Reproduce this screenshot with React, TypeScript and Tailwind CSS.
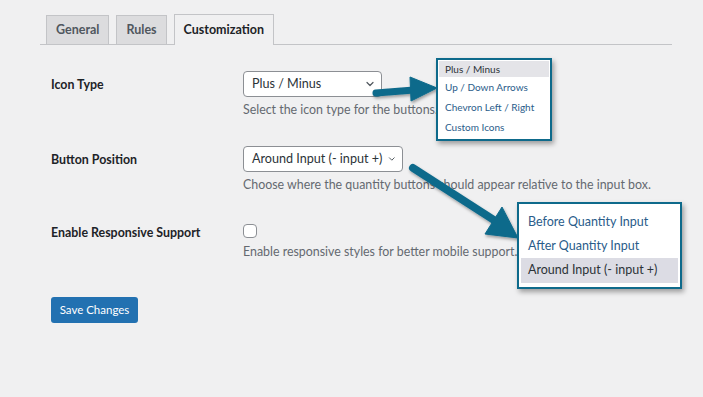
import React, { type FC } from "react";

const font = { fontFamily: 'Lato, "Noto Sans", sans-serif' };

const Chevron: FC = () => (
  <svg width="12" height="12" viewBox="0 0 20 20" fill="none">
    <path d="M5 7.5l5 5 5-5" stroke="#50575e" strokeWidth="2" strokeLinecap="round" strokeLinejoin="round" />
  </svg>
);

const Select: FC<{ value: string; width: string }> = ({ value, width }) => (
  <div
    className={`${width} h-[26px] flex items-center justify-between gap-[5px] bg-white border border-[#8c8f94] rounded-[4px] pl-[8px] pr-[5px] text-[12.6px] text-[#2c3338] whitespace-nowrap`}
  >
    <span>{value}</span>
    <Chevron />
  </div>
);

const App: FC = () => {
  return (
    <div className="relative w-[703px] h-[397px] bg-[#f0f0f1] overflow-hidden" style={font}>
      {/* Tabs */}
      <div className="pt-[14px] ml-[40px] mr-[31px] flex items-end gap-[7px] pl-[6px] border-b border-[#c3c4c7] h-[45px]">
        <div className="h-[29px] px-[9px] flex items-center bg-[#dcdcde] border border-b-0 border-[#c3c4c7] text-[12.5px] font-bold text-[#50575e]">
          General
        </div>
        <div className="h-[29px] px-[9px] flex items-center bg-[#dcdcde] border border-b-0 border-[#c3c4c7] text-[12.5px] font-bold text-[#50575e]">
          Rules
        </div>
        <div className="h-[31px] -mb-px px-[9px] flex items-center bg-[#f0f0f1] border border-b-0 border-[#c3c4c7] text-[12.5px] font-bold text-[#1d2327]">
          Customization
        </div>
      </div>

      {/* Form */}
      <div className="ml-[51px] mt-[26px] flex flex-col text-[12.4px]">
        <div className="flex h-[75px]">
          <div className="w-[192px] pt-[5px] font-bold text-[#1d2327]">Icon Type</div>
          <div className="flex flex-col gap-[4px]">
            <Select value="Plus / Minus" width="w-[139px]" />
            <p className="text-[#646970]">Select the icon type for the buttons.</p>
          </div>
        </div>
        <div className="flex h-[78px]">
          <div className="w-[192px] pt-[5px] font-bold text-[#1d2327]">Button Position</div>
          <div className="flex flex-col gap-[4px]">
            <Select value="Around Input (- input +)" width="w-[160px]" />
            <p className="text-[#646970] whitespace-nowrap">
              Choose where the quantity buttons should appear relative to the input box.
            </p>
          </div>
        </div>
        <div className="flex h-[73px]">
          <div className="w-[192px] font-bold text-[#1d2327] whitespace-nowrap">Enable Responsive Support</div>
          <div className="flex flex-col gap-[5px]">
            <div className="w-[14px] h-[14px] bg-white border border-[#8c8f94] rounded-[4px]" />
            <p className="text-[#646970] whitespace-nowrap">Enable responsive styles for better mobile support.</p>
          </div>
        </div>
        <div>
          <button className="h-[26px] w-[87px] bg-[#2271b1] rounded-[3px] text-white text-[11.5px]">
            Save Changes
          </button>
        </div>
      </div>

      {/* Arrows */}
      <svg className="absolute left-0 top-0" width="703" height="397" viewBox="0 0 703 397">
        <defs>
          <filter id="sh" x="-20%" y="-20%" width="140%" height="140%">
            <feDropShadow dx="1" dy="2" stdDeviation="1.5" floodColor="#000" floodOpacity="0.35" />
          </filter>
        </defs>
        <g filter="url(#sh)" fill="#0e6a8b" stroke="#0e6a8b">
          <line x1="376" y1="93" x2="414" y2="90" strokeWidth="7" strokeLinecap="round" />
          <polygon points="410,77 437,88 411,101" strokeWidth="1" strokeLinejoin="round" />
          <line x1="413" y1="168" x2="497" y2="222" strokeWidth="8" strokeLinecap="round" />
          <polygon points="485,234 518,238 502,207" strokeWidth="1" strokeLinejoin="round" />
        </g>
      </svg>

      {/* Dropdown 1 */}
      <div className="absolute left-[436px] top-[58px] w-[116px] h-[83px] border-2 border-[#0e6a8b] bg-white shadow-[2px_3px_5px_rgba(0,0,0,0.35)] text-[10px] p-px">
        <div className="h-[16px] bg-[#e4e4e8] pl-[6px] flex items-center text-[#2c3338]">Plus / Minus</div>
        <div className="h-[20px] pl-[6px] flex items-center text-[#2a5c8a]">Up / Down Arrows</div>
        <div className="h-[20px] pl-[6px] flex items-center text-[#2a5c8a]">Chevron Left / Right</div>
        <div className="h-[20px] pl-[6px] flex items-center text-[#2a5c8a]">Custom Icons</div>
      </div>

      {/* Dropdown 2 */}
      <div className="absolute left-[517px] top-[202px] w-[165px] h-[87px] border-2 border-[#0e6a8b] bg-white shadow-[2px_3px_5px_rgba(0,0,0,0.35)] text-[12.5px] pt-[6px] px-[2px]">
        <div className="h-[24px] pl-[7px] flex items-center text-[#2a5c8a]">Before Quantity Input</div>
        <div className="h-[24px] pl-[7px] flex items-center text-[#2a5c8a]">After Quantity Input</div>
        <div className="h-[25px] pl-[7px] flex items-center bg-[#dcdce4] text-[#2c3338]">Around Input (- input +)</div>
      </div>
    </div>
  );
};

export default App;
